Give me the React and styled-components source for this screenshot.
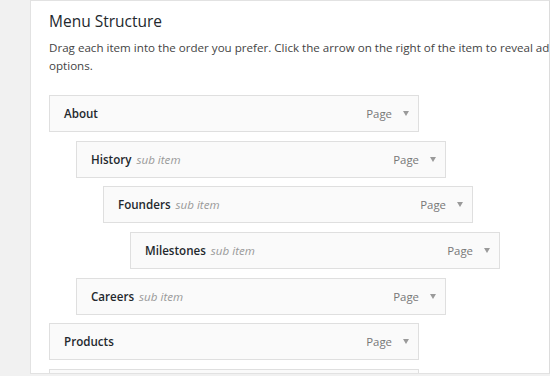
import React from "react";
import styled, { createGlobalStyle } from "styled-components";

const GlobalStyle = createGlobalStyle`
  html, body {
    margin: 0;
    padding: 0;
    background: #f1f1f1;
    font-family: "Open Sans", "Noto Sans", sans-serif;
    -webkit-font-smoothing: antialiased;
  }
`;

const Page = styled.div`
  display: flex;
  height: 376px;
  overflow: hidden;
  padding-left: 30px;
`;

const Panel = styled.div`
  flex: 1;
  height: 374px;
  background: #fff;
  border: 1px solid #e2e2e2;
  border-right-color: #dcdcdc;
  overflow: hidden;
  padding: 10px 0 0 18px;
  box-sizing: border-box;
`;

const Title = styled.h3`
  margin: 0;
  font-size: 15.5px;
  font-weight: 400;
  line-height: 20px;
  color: #23282d;
`;

const Description = styled.p`
  margin: 8px 0 0;
  width: 640px;
  font-size: 11.6px;
  line-height: 18px;
  color: #444;
`;

const MenuList = styled.ul`
  list-style: none;
  margin: 20px 0 0;
  padding: 0;
  display: flex;
  flex-direction: column;
  gap: 8.67px;
`;

const Item = styled.li`
  margin-left: ${(p) => p.$depth * 27}px;
  width: 370px;
  height: 37px;
  box-sizing: border-box;
  display: flex;
  align-items: center;
  padding: 0 8px 0 14px;
  background: #fafafa;
  border: 1px solid #dfdfdf;
`;

const Label = styled.span`
  font-size: 11.6px;
  font-weight: 600;
  color: #23282d;
`;

const SubTag = styled.span`
  margin-left: 5px;
  font-size: 11.6px;
  font-style: italic;
  color: #999;
`;

const TypeText = styled.span`
  margin-left: auto;
  font-size: 11.4px;
  color: #777;
`;

const Arrow = styled.span`
  margin-left: 11px;
  margin-right: 1px;
  width: 0;
  height: 0;
  border-left: 3.5px solid transparent;
  border-right: 3.5px solid transparent;
  border-top: 5px solid #9a9a9a;
`;

const items = [
  { title: "About", depth: 0 },
  { title: "History", depth: 1, sub: true },
  { title: "Founders", depth: 2, sub: true },
  { title: "Milestones", depth: 3, sub: true },
  { title: "Careers", depth: 1, sub: true },
  { title: "Products", depth: 0 },
  { title: "Services", depth: 0 },
];

export default function App() {
  return (
    <>
      <GlobalStyle />
      <Page>
        <Panel>
          <Title>Menu Structure</Title>
          <Description>
            Drag each item into the order you prefer. Click the arrow on the right of the item to
            reveal additional configuration options.
          </Description>
          <MenuList>
            {items.map((it) => (
              <Item key={it.title} $depth={it.depth}>
                <Label>{it.title}</Label>
                {it.sub && <SubTag>sub item</SubTag>}
                <TypeText>Page</TypeText>
                <Arrow />
              </Item>
            ))}
          </MenuList>
        </Panel>
      </Page>
    </>
  );
}
